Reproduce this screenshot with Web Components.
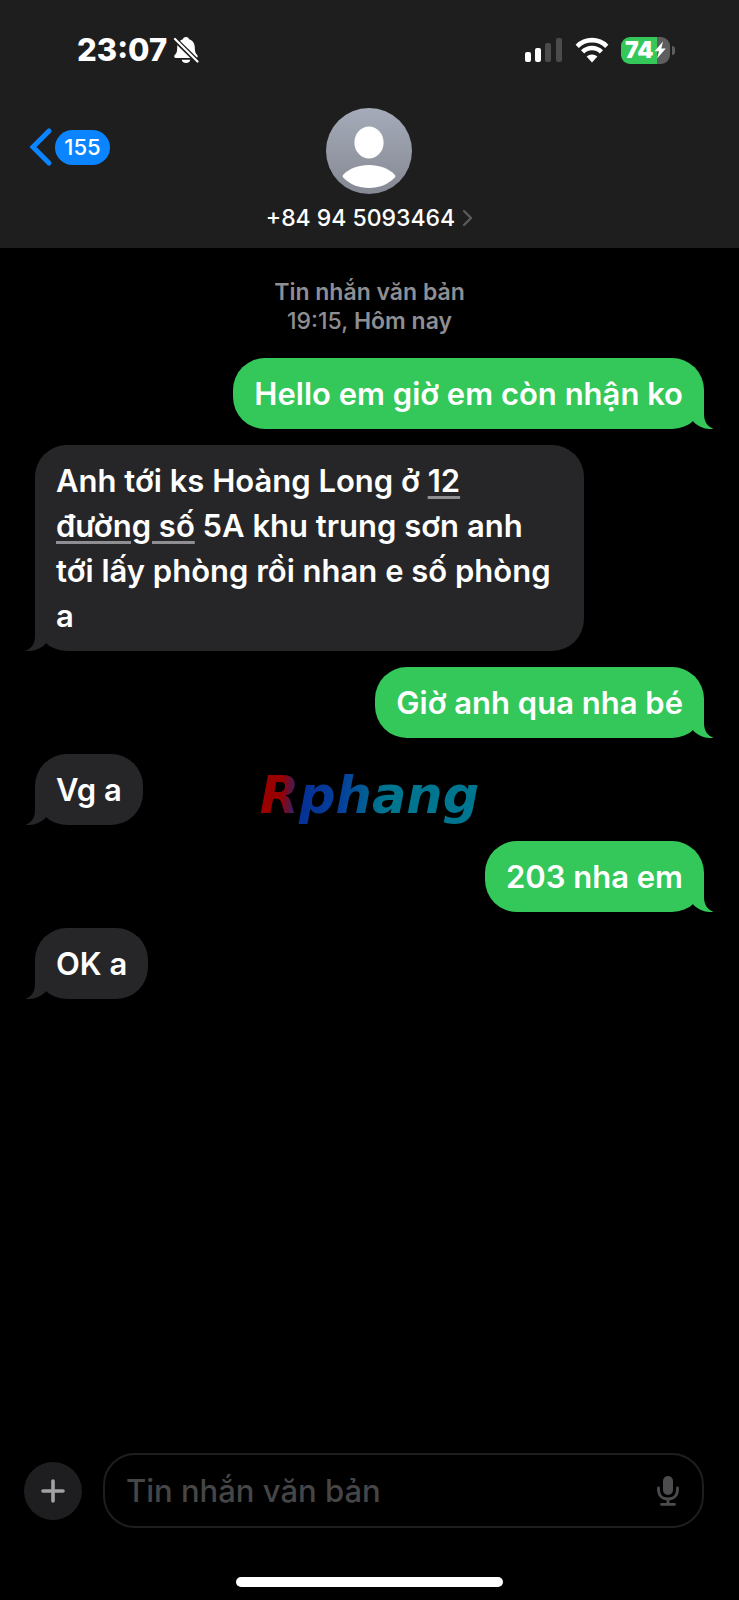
<!DOCTYPE html>
<html lang="vi">
<head>
<meta charset="utf-8">
<meta name="viewport" content="width=device-width, initial-scale=1">
<title>Tin nhắn</title>
<style>
  html { height: 100%; background: #000; }
  body { margin: 0; min-height: 100%; display: flex; font-family: Inter, "Noto Sans", sans-serif; color: #fff; background: #000; }
</style>
</head>
<body>
<messages-app></messages-app>

<script>
const define = (name, html) => customElements.define(name, class extends HTMLElement {
  constructor() {
    super();
    const t = document.createElement('template');
    t.innerHTML = html;
    this.attachShadow({ mode: 'open' }).append(t.content.cloneNode(true));
  }
});

define('status-bar', `
<style>
  :host { display: flex; align-items: center; justify-content: space-between; height: 100px; padding: 0 64px 0 77px; }
  .time, .system { display: flex; align-items: center; }
  .time { gap: 6px; font-size: 31px; line-height: 40px; font-weight: 800; }
  .system { gap: 12px; }
  svg { display: block; }
</style>
<div class="time"><span>23:07</span>
  <svg width="26" height="28" viewBox="0 0 26 28">
    <path fill="#fff" d="M13 1c1.600 0 2.700.8 3.100 2.200 3.700 1.200 5.700 4.300 5.700 8.300 0 4.500 1 6 2.400 7.600.9 1 .7 2.900-.8 2.900H2.600c-1.500 0-1.900-1.900-.9-2.900C3.300 17.500 4.200 16 4.200 11.500c0-4 2-7.100 5.700-8.300C10.300 1.800 11.400 1 13 1z"/>
    <path fill="#fff" d="M8.700 23.700h8.600c-.4 2.100-2.100 3.300-4.300 3.300s-3.900-1.200-4.300-3.300z"/>
    <path stroke="#1e1e1e" stroke-width="5" d="M0 1.500 26 27"/>
    <path stroke="#fff" stroke-width="2.200" stroke-linecap="round" d="M2 3 24.500 25.500"/>
  </svg>
</div>
<div class="system">
  <svg width="39" height="26" viewBox="0 0 39 26">
    <rect x="1" y="15" width="6" height="10" rx="2" fill="#fff"/><rect x="11" y="11" width="6" height="14" rx="2" fill="#fff"/>
    <rect x="21" y="6" width="6" height="19" rx="2" fill="#4b4b4b"/><rect x="32" y="1" width="6" height="24" rx="2" fill="#4b4b4b"/>
  </svg>
  <svg width="34" height="26" viewBox="0 0 34 26" fill="none" stroke="#fff" stroke-width="4.600">
    <path d="M2.200 9.300C10.500 1.100 23.500 1.100 31.800 9.300"/><path d="M7.600 14.900C12.900 9.700 21.100 9.700 26.400 14.900"/>
    <path fill="#fff" stroke="none" d="M17 25.400 11.600 19.600C14.700 16.900 19.300 16.900 22.400 19.600z"/>
  </svg>
  <battery-level>74</battery-level>
</div>`);

define('battery-level', `
<style>
  :host { display: flex; align-items: center; gap: 2px; }
  .cell { display: flex; align-items: center; width: 49px; height: 27px; box-sizing: border-box; padding-left: 4px; border-radius: 9px;
    background: linear-gradient(90deg, #34c759 74%, #5e5e5e 74%); font-size: 23px; line-height: 27px; font-weight: 900; }
  svg { flex: none; }
  .cap { width: 3px; height: 9px; border-radius: 0 3px 3px 0; background: #5e5e5e; }
</style>
<span class="cell"><slot></slot><svg width="12" height="18" viewBox="0 0 12 18"><path fill="#fff" d="M9 .5 .5 10.200H5L3 17.500 11.800 7.500H7.300z"/></svg></span><span class="cap"></span>`);

define('back-button', `
<style>
  :host { display: block; }
  button { display: flex; align-items: center; gap: 2px; padding: 0; border: 0; background: none; color: #fff; font: 500 22px/35px Inter, sans-serif; cursor: pointer; }
  .badge { min-width: 55px; box-sizing: border-box; padding: 0 8px; border-radius: 18px; background: #0a84ff; text-align: center; }
</style>
<button type="button" aria-label="Quay lại"><svg width="24" height="40" viewBox="0 0 24 40" fill="none" stroke="#0a84ff" stroke-width="5" stroke-linecap="round" stroke-linejoin="miter"><path d="M20 4 4 20 20 36"/></svg><span class="badge"><slot></slot></span></button>`);

define('contact-card', `
<style>
  :host { display: block; }
  button { display: flex; flex-direction: column; align-items: center; gap: 10px; padding: 0; border: 0; background: none; color: #fff; font: 500 23px/28px Inter, sans-serif; cursor: pointer; }
  .name { display: flex; align-items: center; gap: 7px; }
  svg { display: block; }
</style>
<button type="button">
  <svg width="86" height="86" viewBox="0 0 86 86"><defs><linearGradient id="g" x2="0" y2="1"><stop stop-color="#a5abb9"/><stop offset="1" stop-color="#858993"/></linearGradient></defs>
    <circle cx="43" cy="43" r="43" fill="url(#g)"/><ellipse cx="43" cy="34.500" rx="14.600" ry="16" fill="#fff"/>
    <path fill="#fff" d="M17.200 69.500C16.300 68.300 16.500 67.500 17.500 66.500 23.500 60.500 32.500 57 43 57S62.500 60.500 68.500 66.500C69.500 67.500 69.700 68.300 68.800 69.500 62 76.500 53 80 43 80S24 76.500 17.200 69.500z"/></svg>
  <span class="name"><span><slot></slot></span><svg width="11" height="18" viewBox="0 0 11 18" fill="none" stroke="#5a5a5e" stroke-width="2.400" stroke-linecap="round" stroke-linejoin="round"><path d="M2 2 9 9 2 16"/></svg></span>
</button>`);

define('chat-header', `
<style>
  :host { display: block; background: #1e1e1e; }
  nav { display: grid; grid-template-columns: 1fr auto 1fr; align-items: start; padding: 8px 29px 16px; }
  back-button { padding-top: 19px; justify-self: start; }
</style>
<status-bar></status-bar>
<nav><back-button>155</back-button><contact-card>+84 94 5093464</contact-card></nav>`);

define('chat-bubble', `
<style>
  :host { display: block; position: relative; box-sizing: border-box; max-width: 82%; padding: 13px 21px; border-radius: 32px; font-size: 31px; line-height: 45px; font-weight: 600; --fill: #262628; background: var(--fill); align-self: flex-start; }
  :host([sent]) { --fill: #34c759; align-self: flex-end; }
  svg { position: absolute; bottom: 0; left: -10px; transform: scaleX(-1); }
  :host([sent]) svg { left: auto; right: -10px; transform: none; }
  path { fill: var(--fill); }
  .text { position: relative; }
  ::slotted(a) { color: inherit; text-decoration: underline 3px #8e8e93; text-underline-offset: 4px; }
</style>
<svg width="40" height="36" viewBox="0 0 40 36"><path d="M10 0H30V21C30 28 33 33.500 39.500 35.700 32 37 25 34 19.500 29z"/></svg>
<span class="text"><slot></slot></span>`);

define('chat-thread', `
<style>
  :host { display: flex; flex-direction: column; flex: 1; gap: 16px; padding: 30px 35px; }
  header { align-self: center; margin-bottom: 6px; text-align: center; font-size: 23px; line-height: 29px; font-weight: 600; color: #8e8e93; }
  span { font-weight: 500; }
</style>
<header>Tin nhắn văn bản<br><span>19:15,</span> Hôm nay</header>
<slot></slot>`);

define('message-composer', `
<style>
  :host { display: flex; align-items: center; gap: 21px; padding: 0 35px 0 24px; }
  button { display: flex; align-items: center; justify-content: center; flex: none; padding: 0; border: 0; background: none; cursor: pointer; }
  .add { width: 58px; height: 58px; border-radius: 50%; background: #1e1e20; }
  .field { display: flex; align-items: center; flex: 1; min-width: 0; height: 75px; box-sizing: border-box; padding: 0 22px 0 21px; border: 2px solid #1e1e1f; border-radius: 32px; }
  input { flex: 1; min-width: 0; padding: 0; border: 0; outline: 0; background: none; color: #fff; font: 500 31px/45px Inter, sans-serif; }
  input::placeholder { color: #464648; opacity: 1; }
</style>
<button class="add" type="button" aria-label="Thêm"><svg width="24" height="24" viewBox="0 0 24 24" stroke="#a2a2a4" stroke-width="3.600" stroke-linecap="round"><path d="M12 2V22M2 12H22"/></svg></button>
<div class="field"><input type="text" aria-label="Tin nhắn văn bản" placeholder="Tin nhắn văn bản">
<button type="button" aria-label="Đọc chính tả"><svg width="24" height="32" viewBox="0 0 24 32" fill="none" stroke="#4c4c4e" stroke-width="2.800" stroke-linecap="round"><rect x="7" y="1" width="10" height="19" rx="5" fill="#4c4c4e" stroke="none"/><path d="M2.500 13V14.500C2.500 20.500 6.500 24 12 24S21.500 20.500 21.500 14.500V13M12 24V29M5.500 29.400H18.500"/></svg></button></div>`);

define('home-indicator', `
<style>
  :host { display: flex; justify-content: center; padding: 49px 0 13px; }
  span { width: 36%; height: 10px; border-radius: 5px; background: #fff; }
</style><span></span>`);

define('brand-watermark', `
<style>
  :host { position: absolute; top: 50%; left: 50%; transform: translate(-50%, -50%); pointer-events: none; }
  span { display: block; padding: 0 4px 8px; font: italic 700 51px/64px "DejaVu Sans", sans-serif; color: transparent;
    background: linear-gradient(96deg, #990000 12%, #063096 21%, #05419a 38%, #00758f 56%); -webkit-background-clip: text; background-clip: text; }
</style><span><slot></slot></span>`);

define('messages-app', `
<style>
  :host { position: relative; display: flex; flex-direction: column; flex: 1; min-width: 0; min-height: 100vh; background: #000; }
</style>
<chat-header></chat-header>
<chat-thread>
  <chat-bubble sent>Hello em giờ em còn nhận ko</chat-bubble>
  <chat-bubble>Anh tới ks Hoàng Long ở <a href="#map">12 đường số</a> 5A khu trung sơn anh tới lấy phòng rồi nhan e số phòng a</chat-bubble>
  <chat-bubble sent>Giờ anh qua nha bé</chat-bubble>
  <chat-bubble>Vg a</chat-bubble>
  <chat-bubble sent>203 nha em</chat-bubble>
  <chat-bubble>OK a</chat-bubble>
</chat-thread>
<message-composer></message-composer>
<home-indicator></home-indicator>
<brand-watermark>Rphang</brand-watermark>`);
</script>
</body>
</html>
